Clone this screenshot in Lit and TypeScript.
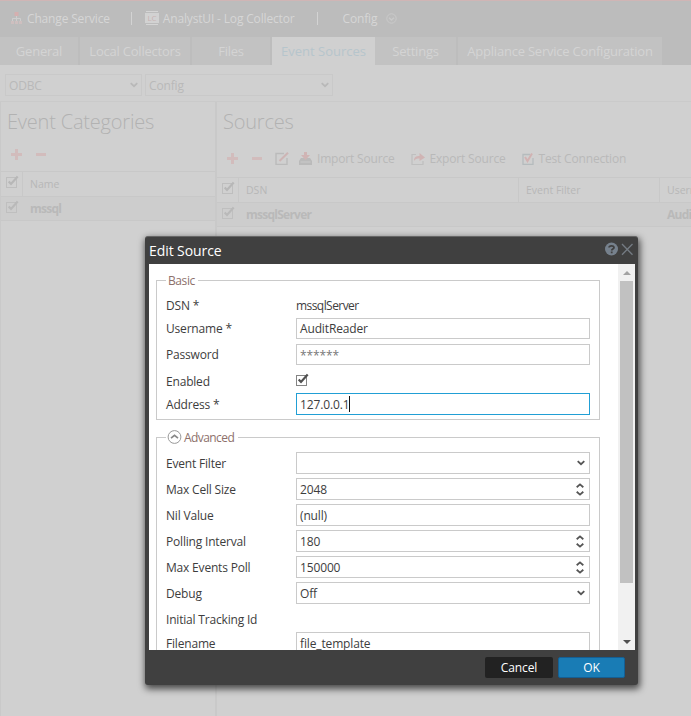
import { LitElement, html, css, nothing } from "lit";
import { customElement, property } from "lit/decorators.js";
import { classMap } from "lit/directives/class-map.js";

const check = html`<svg width="14" height="14" viewBox="0 0 14 14">
  <rect x=".5" y="2.5" width="10" height="10" fill="none" stroke="currentColor" opacity=".7"/>
  <path d="M2.7 6.6 5 9 11.7 1.5" fill="none" stroke="currentColor" stroke-width="2.2"/></svg>`;
const chevron = html`<svg width="8" height="6" viewBox="0 0 8 6">
  <path d="M.7 1.2 4 4.2 7.3 1.2" fill="none" stroke="currentColor" stroke-width="1.8"/></svg>`;
const spinner = html`<svg width="9" height="13" viewBox="0 0 9 13">
  <path d="M.7 4.3 4 1.4 7.3 4.3M.7 8.7 4 11.6 7.3 8.7" fill="none" stroke="currentColor" stroke-width="1.8"/></svg>`;
const plus = html`<svg width="12" height="12" viewBox="0 0 12 12"><path d="M5.500 0v11M0 5.500h11" stroke="#d2bcbc" stroke-width="3"/></svg>`;
const minus = html`<svg width="11" height="12" viewBox="0 0 11 12"><path d="M0 5.500h10" stroke="#d2bcbc" stroke-width="3"/></svg>`;

@customElement("form-row")
export class FormRow extends LitElement {
  @property() label = "";
  @property() value = "";
  @property() kind = "text";

  static styles = css`
    :host { display: flex; align-items: center; height: 22px; margin-bottom: 4px; color: #3d3d3d; }
    .label { width: 130px; flex: none; white-space: nowrap; letter-spacing: -.19px; }
    .plain { font-size: 12px; letter-spacing: -.56px; padding-top: 1px; }
    .field { box-sizing: border-box; width: 294px; height: 100%; border: 1px solid #cacaca; display: flex; align-items: center; padding: 0 4px 0 3px; justify-content: space-between; white-space: nowrap; letter-spacing: -.14px; }
    .focus { border-color: #219fd5; }
    .masked { color: #777; letter-spacing: -.1px; }
    .masked span { padding-top: 1px; }
    .caret { display: inline-block; width: 1px; height: 16px; background: #111; vertical-align: -3px; }
    .end { display: flex; color: #555; }
    .box { display: flex; color: #505050; margin-top: -2px; }
  `;

  render() {
    const boxed = !["static", "check", "heading"].includes(this.kind);
    return html`<span class="label">${this.label}</span>
      ${this.kind === "static" ? html`<span class="plain">${this.value}</span>` : nothing}
      ${this.kind === "check" ? html`<span class="box">${check}</span>` : nothing}
      ${boxed
        ? html`<div class=${classMap({ field: true, focus: this.kind === "focus", masked: this.kind === "masked" })}>
            <span>${this.value}${this.kind === "focus" ? html`<i class="caret"></i>` : nothing}</span>
            <span class="end">${this.kind === "select" ? chevron : this.kind === "spin" ? spinner : nothing}</span>
          </div>`
        : nothing}`;
  }
}

@customElement("edit-dialog")
export class EditDialog extends LitElement {
  static styles = css`
    :host { display: flex; flex-direction: column; box-sizing: border-box; width: 493px; height: 449px; background: #404040; border-top: 1px solid #666; border-radius: 3px; box-shadow: 1px 3px 7px 1px rgba(0,0,0,.65); font: 12px "Open Sans", sans-serif; }
    .title { height: 27px; display: flex; align-items: center; padding: 0 3px 0 4px; color: #fff; font-size: 14px; letter-spacing: -.08px; }
    .title span { flex: 1; }
    .title svg { margin-top: -3px; }
    .body { height: 386px; margin: 0 3px 0 4px; background: #fff; display: flex; overflow: hidden; }
    .form { flex: 1; padding: 16px 0 0 7px; }
    .group { box-sizing: border-box; width: 444px; border: 1px solid #cacaca; padding: 0 9px; margin-bottom: 17px; }
    .basic { height: 140px; }
    .advanced { height: 260px; }
    .legend { display: flex; align-items: center; height: 18px; margin-top: -10px; width: max-content; background: #fff; color: #8d706b; padding: 0 3px; font-size: 12px; letter-spacing: -.58px; }
    .basic .legend { padding-left: 2px; letter-spacing: -.4px; }
    .advanced .legend { padding: 0 4px 0 1px; gap: 2px; }
    .r1 { height: 18px; margin: 7px 0 4px; }
    .r2 { height: 21px; margin-bottom: 5px; }
    .r3 { height: 21px; margin-bottom: 5px; }
    .r4 { height: 22px; margin-bottom: 1px; }
    .first { margin-top: 6px; }
    .heading { height: 22px; margin-bottom: 2px; }
    .scroll { width: 17px; background: #f1f1f1; display: flex; flex-direction: column; align-items: center; }
    .arrow { height: 17px; display: flex; align-items: center; }
    .thumb { width: 13px; height: 302px; background: #c1c1c1; }
    .gap { flex: 1; }
    .footer { flex: 1; display: flex; align-items: center; justify-content: flex-end; padding-right: 13px; gap: 5px; color: #fff; }
    .button { box-sizing: border-box; height: 21px; width: 68px; background: #222; border-radius: 2px; display: flex; align-items: center; justify-content: center; letter-spacing: -.12px; }
    .primary { width: 67px; background: #197cb5; border: 1px solid #145f94; }
  `;

  render() {
    return html`
      <div class="title"><span>Edit Source</span>
        <svg width="31" height="14" viewBox="0 0 31 14">
          <circle cx="7.5" cy="7" r="6.5" fill="#76818d"/>
          <path d="M5.1 5.6C5.1 3.2 10 3.2 10 5.6 10 7.1 7.700 7 7.700 8.500M7.700 9.500v1.800" fill="none" stroke="#404040" stroke-width="1.8"/>
          <path d="M18 2 28.500 12.800M28.500 2 18 12.800" stroke="#747b83" stroke-width="1.300"/>
        </svg>
      </div>
      <div class="body">
        <div class="form">
          <div class="group basic">
            <div class="legend">Basic</div>
            <form-row class="r1" label="DSN *" kind="static" value="mssqlServer"></form-row>
            <form-row class="r2" label="Username *" value="AuditReader"></form-row>
            <form-row class="r3" label="Password" kind="masked" value="******"></form-row>
            <form-row class="r4" label="Enabled" kind="check"></form-row>
            <form-row label="Address *" kind="focus" value="127.0.0.1"></form-row>
          </div>
          <div class="group advanced">
            <div class="legend">
              <svg width="15" height="15" viewBox="0 0 15 15"><circle cx="7.500" cy="7" r="6.400" fill="#fff" stroke="#999"/><path d="M4 8.200 7.500 5.300 11 8.200" fill="none" stroke="#888" stroke-width="1.700"/></svg>
              Advanced
            </div>
            <form-row class="first" label="Event Filter" kind="select"></form-row>
            <form-row label="Max Cell Size" kind="spin" value="2048"></form-row>
            <form-row label="Nil Value" value="(null)"></form-row>
            <form-row label="Polling Interval" kind="spin" value="180"></form-row>
            <form-row label="Max Events Poll" kind="spin" value="150000"></form-row>
            <form-row label="Debug" kind="select" value="Off"></form-row>
            <form-row class="heading" label="Initial Tracking Id" kind="heading"></form-row>
            <form-row label="Filename" value="file_template"></form-row>
          </div>
        </div>
        <div class="scroll">
          <div class="arrow"><svg width="8" height="4"><path d="M0 4 4 0 8 4z" fill="#a3a3a3"/></svg></div>
          <div class="thumb"></div><div class="gap"></div>
          <div class="arrow"><svg width="8" height="4"><path d="M0 0h8L4 4z" fill="#505050"/></svg></div>
        </div>
      </div>
      <div class="footer"><div class="button">Cancel</div><div class="button primary">OK</div></div>`;
  }
}

@customElement("app-root")
export class AppRoot extends LitElement {
  static styles = css`
    :host { display: flex; flex-direction: column; position: relative; width: 691px; height: 716px; overflow: hidden; background: #d0d0d0; color: #b9b9b9; font: 12px "Open Sans", sans-serif; white-space: nowrap; }
    svg { flex: none; }
    .top { box-sizing: border-box; height: 37px; border-top: 1px solid #d0b5b5; background: #bcbcbc; color: #d6d6d6; display: flex; align-items: center; padding: 0 0 2px 11px; }
    .top span { letter-spacing: -.16px; }
    .bar { width: 1px; height: 13px; background: #d3d3d3; }
    .change { margin: 0 21px 0 3px; }
    .lc { margin-left: 13px; }
    .collector { margin: 0 22px 0 4px; }
    .config { margin: 0 9px 0 25px; }
    .tabs { height: 28px; display: flex; background: #bcbcbc; color: #d4d4d4; font-size: 13px; letter-spacing: -.22px; }
    .tab { box-sizing: border-box; flex: none; display: flex; align-items: center; justify-content: center; background: #c2c2c2; border-right: 2px solid #bdbdbd; }
    .tab:last-child { border-right: 0; }
    .active { background: #d0d0d0; color: #b6c5cc; border-right: 0; letter-spacing: 0; }
    .filters { box-sizing: border-box; height: 36px; padding: 9px 5px 0; display: flex; gap: 4px; }
    .select { box-sizing: border-box; height: 22px; width: 137px; border: 1px solid #c9c9c9; display: flex; align-items: center; justify-content: space-between; padding: 0 3px; letter-spacing: -.15px; }
    .wide { width: 188px; margin-left: -1px; }
    .panels { flex: 1; display: flex; border-top: 1px solid #cacaca; }
    .panel { box-sizing: border-box; border-left: 1px solid #c9c9c9; }
    .left { width: 216px; flex: none; border-right: 1px solid #c9c9c9; }
    .right { flex: 1; min-width: 0; overflow: hidden; }
    .heading { font-size: 20px; font-weight: 300; height: 40px; line-height: 40px; padding-left: 6px; letter-spacing: -.2px; color: #b2b2b2; }
    .tools { height: 29px; display: flex; align-items: center; padding: 0 0 4px 10px; box-sizing: border-box; }
    .tools > svg + svg { margin-left: 13px; }
    .right .tools { height: 35px; padding: 0 0 2px 10px; }
    .tools span { margin-left: 5px; letter-spacing: -.18px; }
    .tools svg.next { margin-left: 16px; }
    .tools svg.edit { margin-left: 12px; }
    .tools svg.import { margin-left: 10px; }
    .row { box-sizing: border-box; display: flex; border-top: 1px solid #c8c8c8; height: 25px; }
    .last { border-bottom: 1px solid #c8c8c8; background: #cdcdcd; font-weight: 700; letter-spacing: -.75px; }
    .row > * { box-sizing: border-box; flex: none; display: flex; align-items: center; padding-left: 7px; }
    .row .tick { width: 22px; padding: 0 0 4px 5px; }
    .head { font-size: 10.5px; color: #b7b7b7; }
    .head > * { border-right: 1px solid #c8c8c8; }
    .head > :last-child { border-right: 0; }
    .row .dsn { width: 280px; }
    .row .filter { width: 141px; }
    .dialog { position: absolute; left: 145px; top: 236px; }
  `;

  private tabs: [string, number][] = [
    ["General", 80], ["Local Collectors", 112], ["Files", 80], ["Event Sources", 103], ["Settings", 83], ["Appliance Service Configuration", 204],
  ];

  render() {
    return html`
      <div class="top">
        <svg width="13" height="13" viewBox="0 0 13 13"><path d="M3.500 0h4v4h-4z" fill="#d5afaf"/><path d="M5.500 4v5M1.500 9V6.500h8V9" fill="none" stroke="#cecece"/><path d="M0 9h3v3H0zM4 9h3v3H4zM8 9h3v3H8z" fill="#cebfbf"/></svg>
        <span class="change">Change Service</span><i class="bar"></i>
        <svg class="lc" width="14" height="14" viewBox="0 0 14 14"><path d="M1 .5h12M1 13.500h12" stroke="#d5d5d5"/><rect y="2" width="14" height="10" fill="#d2d2d2"/><text x="7" y="10" font-size="8" text-anchor="middle" fill="#c8b3b3">LC</text></svg>
        <span class="collector">AnalystUI - Log Collector</span><i class="bar"></i>
        <span class="config">Config</span>
        <svg width="11" height="11" viewBox="0 0 11 11"><circle cx="5.500" cy="5.500" r="4.700" fill="none" stroke="#cacaca"/><path d="M3 4.700 5.500 7 8 4.700" fill="none" stroke="#cacaca" stroke-width="1.500"/></svg>
      </div>
      <div class="tabs">${this.tabs.map(([name, width]) => html`<div class=${classMap({ tab: true, active: name === "Event Sources" })} style="width:${width}px">${name}</div>`)}</div>
      <div class="filters"><div class="select">ODBC ${chevron}</div><div class="select wide">Config ${chevron}</div></div>
      <div class="panels">
        <div class="panel left">
          <div class="heading">Event Categories</div>
          <div class="tools">${plus}${minus}</div>
          <div class="row head"><div class="tick">${check}</div><div>Name</div></div>
          <div class="row last"><div class="tick">${check}</div><div>mssql</div></div>
        </div>
        <div class="panel right">
          <div class="heading">Sources</div>
          <div class="tools">${plus}${minus}
            <svg class="edit" width="14" height="13" viewBox="0 0 14 13"><path d="M9 1.500H1v11h11V6" fill="none" stroke="#bbb" stroke-width="1.400"/><path d="M4.500 9 13 .8" stroke="#cdb4b4" stroke-width="2"/></svg>
            <svg class="import" width="13" height="13" viewBox="0 0 13 13"><path d="M2 6 0 9v4h13V9l-2-3z" fill="#bababa"/><path d="M1.500 10h10" stroke="#cacaca"/><path d="M5 0h3v3h3L6.500 8 2 3h3z" fill="#d0b4b4"/></svg>
            <span>Import Source</span>
            <svg class="next" width="14" height="13" viewBox="0 0 14 13"><path d="M5 2.500H1v10h11V9" fill="none" stroke="#bfbfbf" stroke-width="1.200"/><path d="M3 9c0-4 2-5 5.500-5V1l5.500 4.500L8.500 9V6.500C6 6.500 4 7 3 9z" fill="#d0b4b4"/></svg>
            <span>Export Source</span>
            <svg class="next" width="12" height="12" viewBox="0 0 12 12"><path d="M8 1.500H1v10h10V5" fill="none" stroke="#b5bbbd" stroke-width="1.300"/><path d="M3 4 5.500 8 10 .5" fill="none" stroke="#d1b2b2" stroke-width="2"/></svg>
            <span>Test Connection</span>
          </div>
          <div class="row head"><div class="tick">${check}</div><div class="dsn">DSN</div><div class="filter">Event Filter</div><div>Username</div></div>
          <div class="row last"><div class="tick">${check}</div><div class="dsn">mssqlServer</div><div class="filter"></div><div>AuditReader</div></div>
        </div>
      </div>
      <edit-dialog class="dialog"></edit-dialog>`;
  }
}
